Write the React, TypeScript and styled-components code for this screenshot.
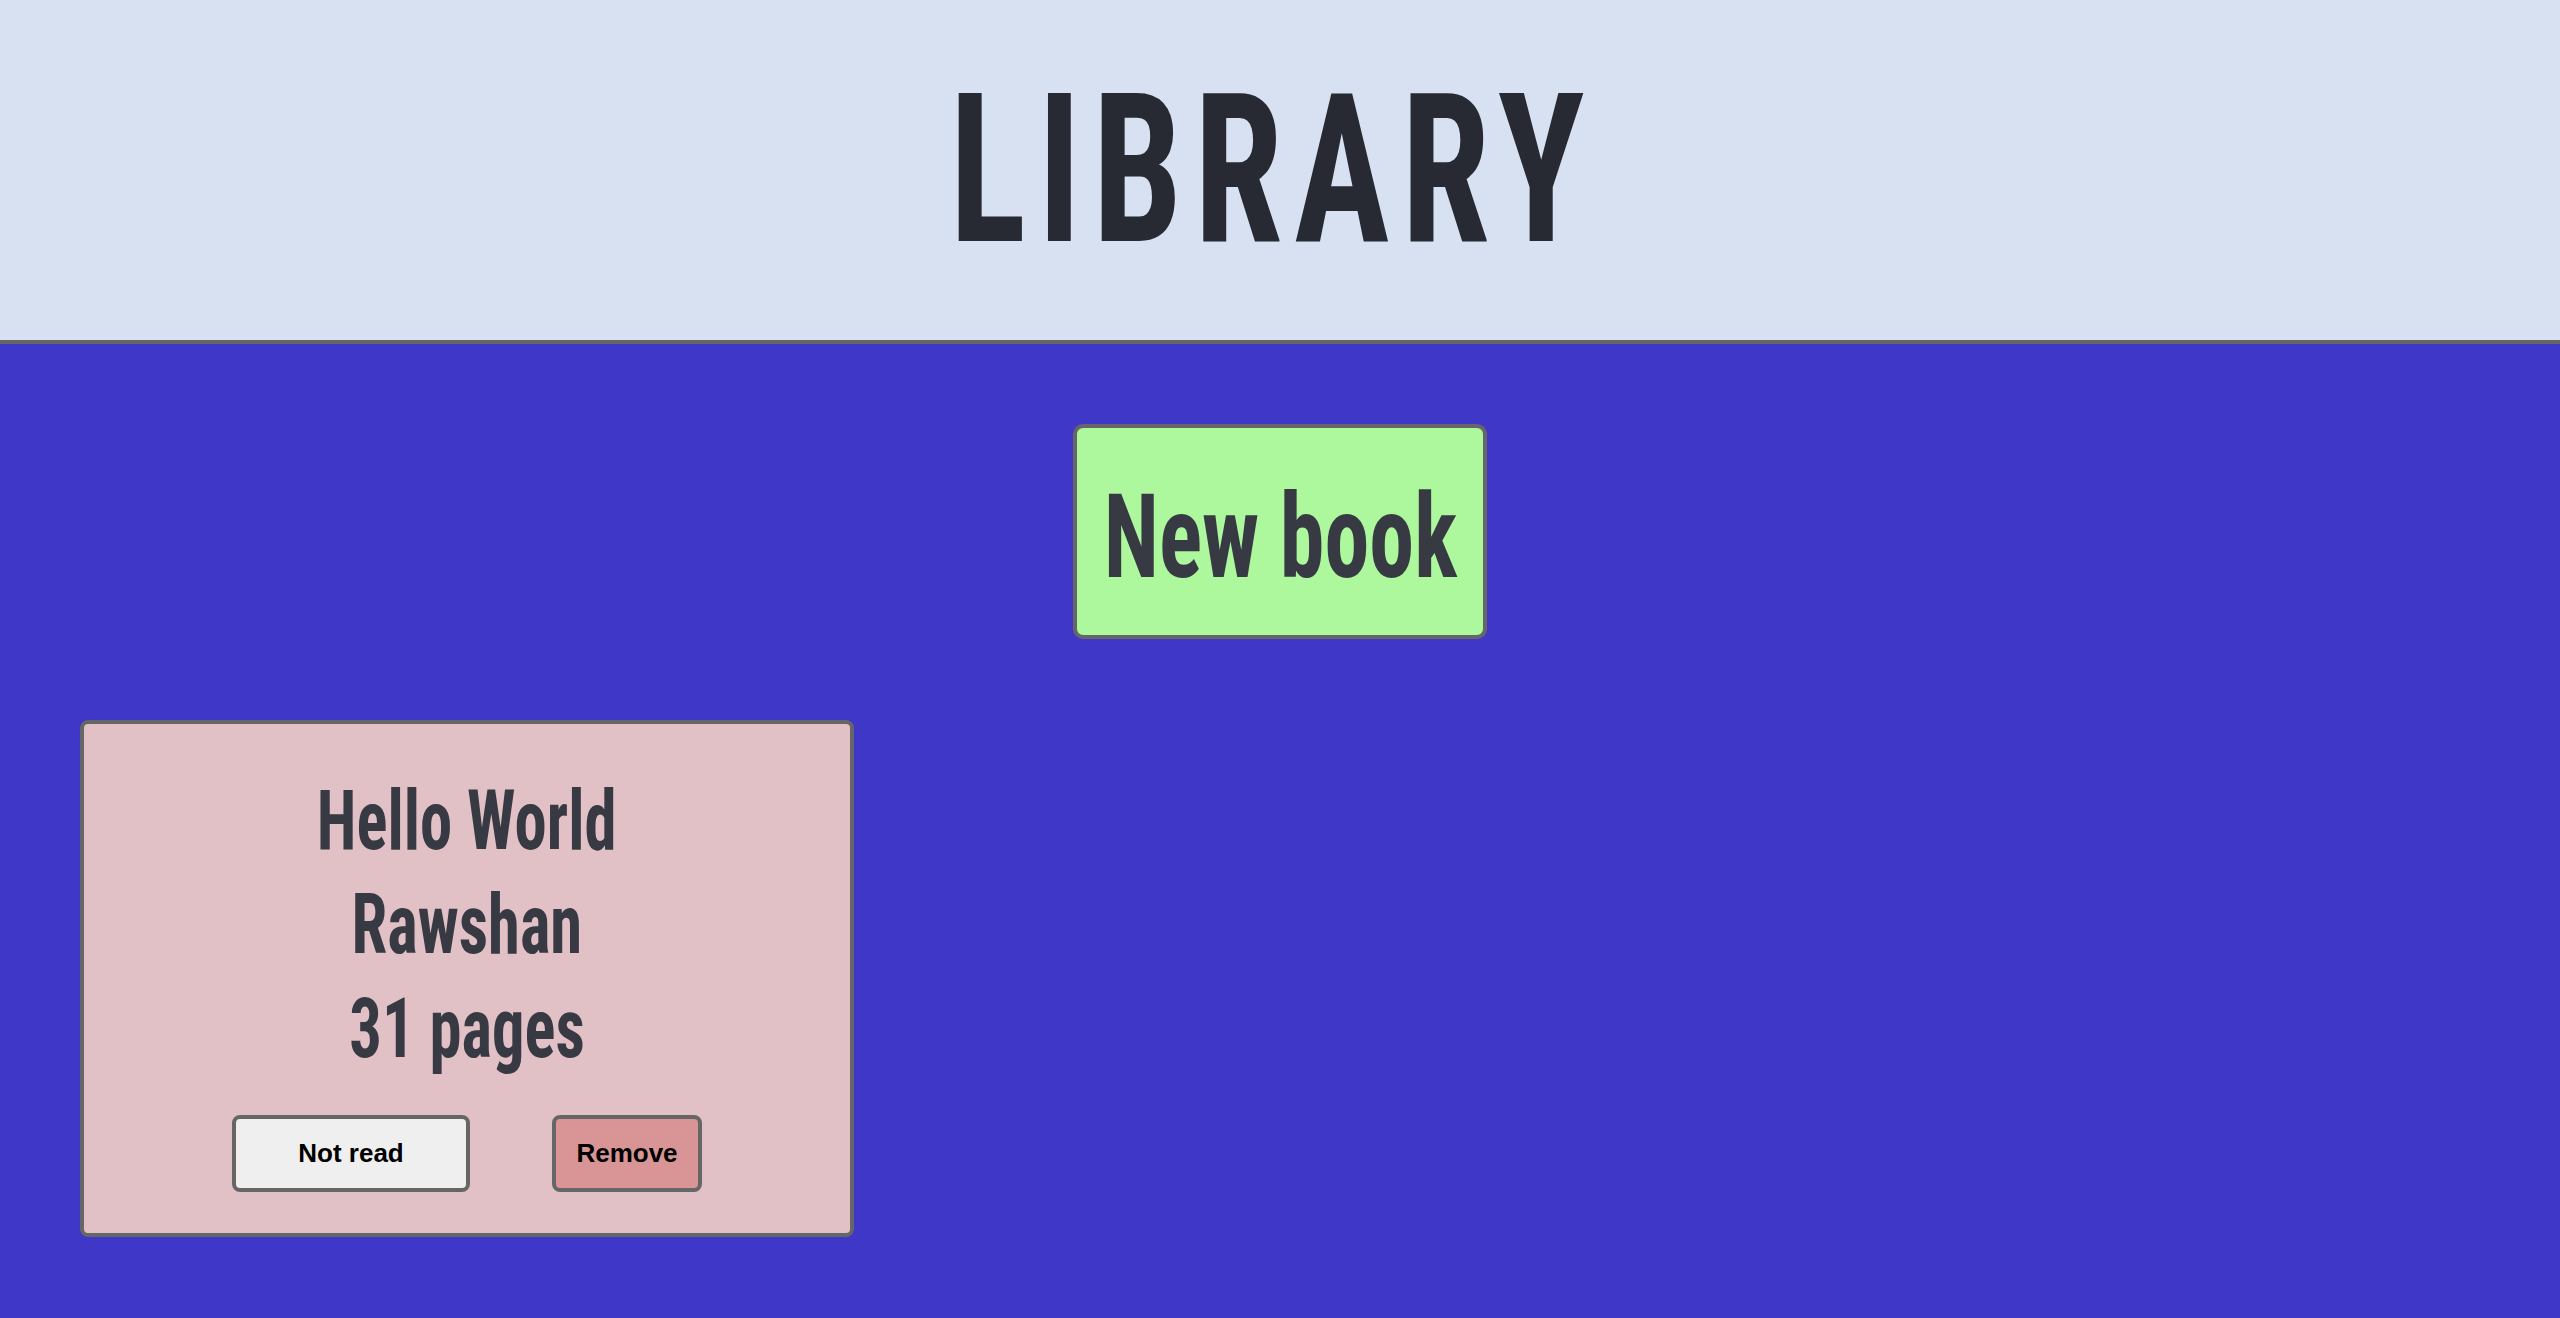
import React from "react";
import styled, { createGlobalStyle } from "styled-components";

const GlobalStyle = createGlobalStyle`
  html, body { margin: 0; padding: 0; }
  body {
    background: #3e37c8;
    min-height: 1318px;
    font-family: "Roboto Condensed", Roboto, "Liberation Sans", sans-serif;
  }
`;

const Header = styled.header`
  height: 340px;
  background: #d7e1f2;
  border-bottom: 4px solid #666666;
  display: flex;
  align-items: center;
  justify-content: center;
`;

const Squeeze = styled.span<{ $sx: number }>`
  display: inline-block;
  white-space: nowrap;
  transform: scaleX(${(p) => p.$sx});
  transform-origin: center;
`;

const Title = styled.h1`
  margin: 0;
  font-size: 208px;
  font-weight: 700;
  color: #272a33;
  line-height: 1;
  letter-spacing: 15px;
  padding-right: 14px;
`;

const Main = styled.main`
  display: flex;
  flex-direction: column;
  padding: 80px 80px 0;
  gap: 81px;
`;

const NewBookButton = styled.button`
  align-self: center;
  width: 414px;
  height: 215px;
  box-sizing: border-box;
  background: #adf79d;
  border: 4px solid #666666;
  border-radius: 10px;
  color: #373943;
  font-family: inherit;
  font-weight: 700;
  font-size: 117px;
  line-height: 1;
  padding: 12px 0 0;
  display: flex;
  align-items: center;
  justify-content: center;
  cursor: pointer;
`;

const Grid = styled.section`
  display: grid;
  grid-template-columns: repeat(auto-fill, 774px);
  gap: 40px;
`;

const Card = styled.article`
  box-sizing: border-box;
  width: 774px;
  height: 517px;
  background: #e1c1c5;
  border: 4px solid #666666;
  border-radius: 8px;
  padding: 45px 0 0;
  display: flex;
  flex-direction: column;
  align-items: center;
`;

const Line = styled.div`
  font-size: 84px;
  font-weight: 700;
  line-height: 104px;
  color: #373943;
  text-align: center;
`;

const Actions = styled.div`
  margin-top: 34px;
  display: flex;
  gap: 82px;
  justify-content: center;
`;

const ActionButton = styled.button<{ $w: number; $bg: string }>`
  box-sizing: border-box;
  width: ${(p) => p.$w}px;
  height: 77px;
  background: ${(p) => p.$bg};
  border: 4px solid #666666;
  border-radius: 8px;
  font-family: "Liberation Sans", Arial, sans-serif;
  font-weight: 700;
  font-size: 26px;
  color: #000;
  padding: 0;
  cursor: pointer;
`;

const books = [{ title: "Hello World", author: "Rawshan", pages: 31, read: false }];

export default function App() {
  return (
    <>
      <GlobalStyle />
      <Header>
        <Title>
          <Squeeze $sx={0.77}>LIBRARY</Squeeze>
        </Title>
      </Header>
      <Main>
        <NewBookButton>
          <Squeeze $sx={0.77}>New book</Squeeze>
        </NewBookButton>
        <Grid>
          {books.map((b) => (
            <Card key={b.title}>
              <Line>
                <Squeeze $sx={0.77}>{b.title}</Squeeze>
              </Line>
              <Line>
                <Squeeze $sx={0.77}>{b.author}</Squeeze>
              </Line>
              <Line>
                <Squeeze $sx={0.77}>{b.pages} pages</Squeeze>
              </Line>
              <Actions>
                <ActionButton $w={238} $bg="#efefef">
                  {b.read ? "Read" : "Not read"}
                </ActionButton>
                <ActionButton $w={150} $bg="#d99595">
                  Remove
                </ActionButton>
              </Actions>
            </Card>
          ))}
        </Grid>
      </Main>
    </>
  );
}
